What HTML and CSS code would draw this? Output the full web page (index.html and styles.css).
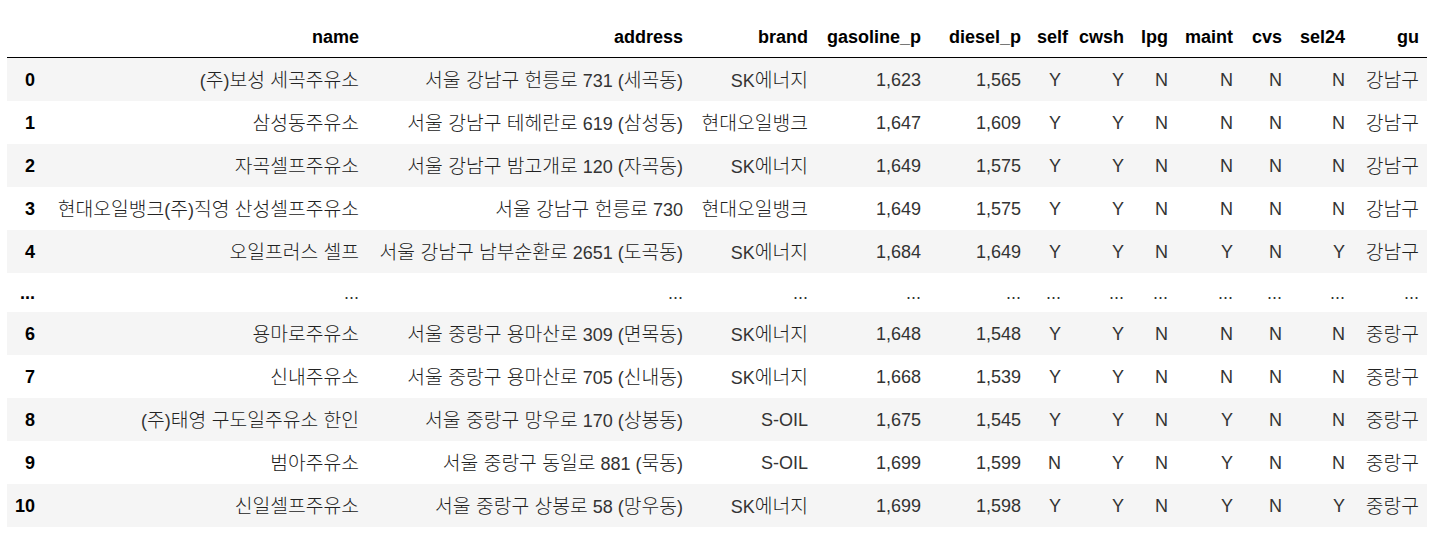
FILE: index.html
```html
<!DOCTYPE html>
<html lang="ko">
<head>
<meta charset="utf-8">
<title>DataFrame</title>
<link rel="stylesheet" href="styles.css">
</head>
<body>
<div class="wrap">
<table class="dataframe">
  <colgroup>
    <col class="w-idx"><col class="w-name"><col class="w-address"><col class="w-brand"><col class="w-gas"><col class="w-diesel"><col class="w-self"><col class="w-cwsh"><col class="w-lpg"><col class="w-maint"><col class="w-cvs"><col class="w-sel24"><col class="w-gu">
  </colgroup>
  <thead>
    <tr>
      <th></th><th>name</th><th>address</th><th>brand</th><th>gasoline_p</th><th>diesel_p</th><th>self</th><th>cwsh</th><th>lpg</th><th>maint</th><th>cvs</th><th>sel24</th><th>gu</th>
    </tr>
  </thead>
  <tbody>
    <tr><th>0</th><td>(<span class="ko">주</span>)<span class="ko">보성 세곡주유소</span></td><td><span class="ko">서울 강남구 헌릉로</span> 731 (<span class="ko">세곡동</span>)</td><td>SK<span class="ko">에너지</span></td><td>1,623</td><td>1,565</td><td>Y</td><td>Y</td><td>N</td><td>N</td><td>N</td><td>N</td><td><span class="ko">강남구</span></td></tr>
    <tr><th>1</th><td><span class="ko">삼성동주유소</span></td><td><span class="ko">서울 강남구 테헤란로</span> 619 (<span class="ko">삼성동</span>)</td><td><span class="ko">현대오일뱅크</span></td><td>1,647</td><td>1,609</td><td>Y</td><td>Y</td><td>N</td><td>N</td><td>N</td><td>N</td><td><span class="ko">강남구</span></td></tr>
    <tr><th>2</th><td><span class="ko">자곡셀프주유소</span></td><td><span class="ko">서울 강남구 밤고개로</span> 120 (<span class="ko">자곡동</span>)</td><td>SK<span class="ko">에너지</span></td><td>1,649</td><td>1,575</td><td>Y</td><td>Y</td><td>N</td><td>N</td><td>N</td><td>N</td><td><span class="ko">강남구</span></td></tr>
    <tr><th>3</th><td><span class="ko">현대오일뱅크</span>(<span class="ko">주</span>)<span class="ko">직영 산성셀프주유소</span></td><td><span class="ko">서울 강남구 헌릉로</span> 730</td><td><span class="ko">현대오일뱅크</span></td><td>1,649</td><td>1,575</td><td>Y</td><td>Y</td><td>N</td><td>N</td><td>N</td><td>N</td><td><span class="ko">강남구</span></td></tr>
    <tr><th>4</th><td><span class="ko">오일프러스 셀프</span></td><td><span class="ko">서울 강남구 남부순환로</span> 2651 (<span class="ko">도곡동</span>)</td><td>SK<span class="ko">에너지</span></td><td>1,684</td><td>1,649</td><td>Y</td><td>Y</td><td>N</td><td>Y</td><td>N</td><td>Y</td><td><span class="ko">강남구</span></td></tr>
    <tr class="ell"><th>...</th><td>...</td><td>...</td><td>...</td><td>...</td><td>...</td><td>...</td><td>...</td><td>...</td><td>...</td><td>...</td><td>...</td><td>...</td></tr>
    <tr><th>6</th><td><span class="ko">용마로주유소</span></td><td><span class="ko">서울 중랑구 용마산로</span> 309 (<span class="ko">면목동</span>)</td><td>SK<span class="ko">에너지</span></td><td>1,648</td><td>1,548</td><td>Y</td><td>Y</td><td>N</td><td>N</td><td>N</td><td>N</td><td><span class="ko">중랑구</span></td></tr>
    <tr><th>7</th><td><span class="ko">신내주유소</span></td><td><span class="ko">서울 중랑구 용마산로</span> 705 (<span class="ko">신내동</span>)</td><td>SK<span class="ko">에너지</span></td><td>1,668</td><td>1,539</td><td>Y</td><td>Y</td><td>N</td><td>N</td><td>N</td><td>N</td><td><span class="ko">중랑구</span></td></tr>
    <tr><th>8</th><td>(<span class="ko">주</span>)<span class="ko">태영 구도일주유소 한인</span></td><td><span class="ko">서울 중랑구 망우로</span> 170 (<span class="ko">상봉동</span>)</td><td>S-OIL</td><td>1,675</td><td>1,545</td><td>Y</td><td>Y</td><td>N</td><td>Y</td><td>N</td><td>N</td><td><span class="ko">중랑구</span></td></tr>
    <tr><th>9</th><td><span class="ko">범아주유소</span></td><td><span class="ko">서울 중랑구 동일로</span> 881 (<span class="ko">묵동</span>)</td><td>S-OIL</td><td>1,699</td><td>1,599</td><td>N</td><td>Y</td><td>N</td><td>Y</td><td>N</td><td>N</td><td><span class="ko">중랑구</span></td></tr>
    <tr><th>10</th><td><span class="ko">신일셀프주유소</span></td><td><span class="ko">서울 중랑구 상봉로</span> 58 (<span class="ko">망우동</span>)</td><td>SK<span class="ko">에너지</span></td><td>1,699</td><td>1,598</td><td>Y</td><td>Y</td><td>N</td><td>Y</td><td>N</td><td>Y</td><td><span class="ko">중랑구</span></td></tr>
  </tbody>
</table>
</div>
</body>
</html>
```

FILE: styles.css
```css
html, body {
  margin: 0;
  padding: 0;
  background: #ffffff;
}

.wrap {
  padding: 17px 0 0 7px;
}

.dataframe {
  border-collapse: collapse;
  border-spacing: 0;
  table-layout: fixed;
  width: 1420px;
  font-family: "Liberation Sans", "Noto Sans CJK KR", Arial, sans-serif;
  font-size: 18px;
  color: #000000;
}

.w-idx { width: 36px; }
.w-name { width: 324px; }
.w-address { width: 324px; }
.w-brand { width: 125px; }
.w-gas { width: 113px; }
.w-diesel { width: 100px; }
.w-self { width: 40px; }
.w-cwsh { width: 63px; }
.w-lpg { width: 44px; }
.w-maint { width: 65px; }
.w-cvs { width: 49px; }
.w-sel24 { width: 63px; }
.w-gu { width: 74px; }

.dataframe th,
.dataframe td {
  text-align: right;
  vertical-align: middle;
  padding: 0 8px;
  line-height: 22px;
  white-space: nowrap;
  border: none;
  overflow: visible;
}

.dataframe th {
  font-weight: bold;
}

.dataframe td {
  color: #333333;
}

.ko {
  font-family: "Noto Sans CJK KR", sans-serif;
  font-size: 19.3px;
  font-weight: 300;
  line-height: 22px;
  color: #222222;
}

.dataframe thead th {
  height: 40px;
  border-bottom: 1px solid #000000;
}

.dataframe tbody tr td,
.dataframe tbody tr th {
  height: 43px;
}

.dataframe tbody tr.ell td,
.dataframe tbody tr.ell th {
  height: 39px;
}

.dataframe tbody tr:nth-child(odd) {
  background: #f5f5f5;
}
```
